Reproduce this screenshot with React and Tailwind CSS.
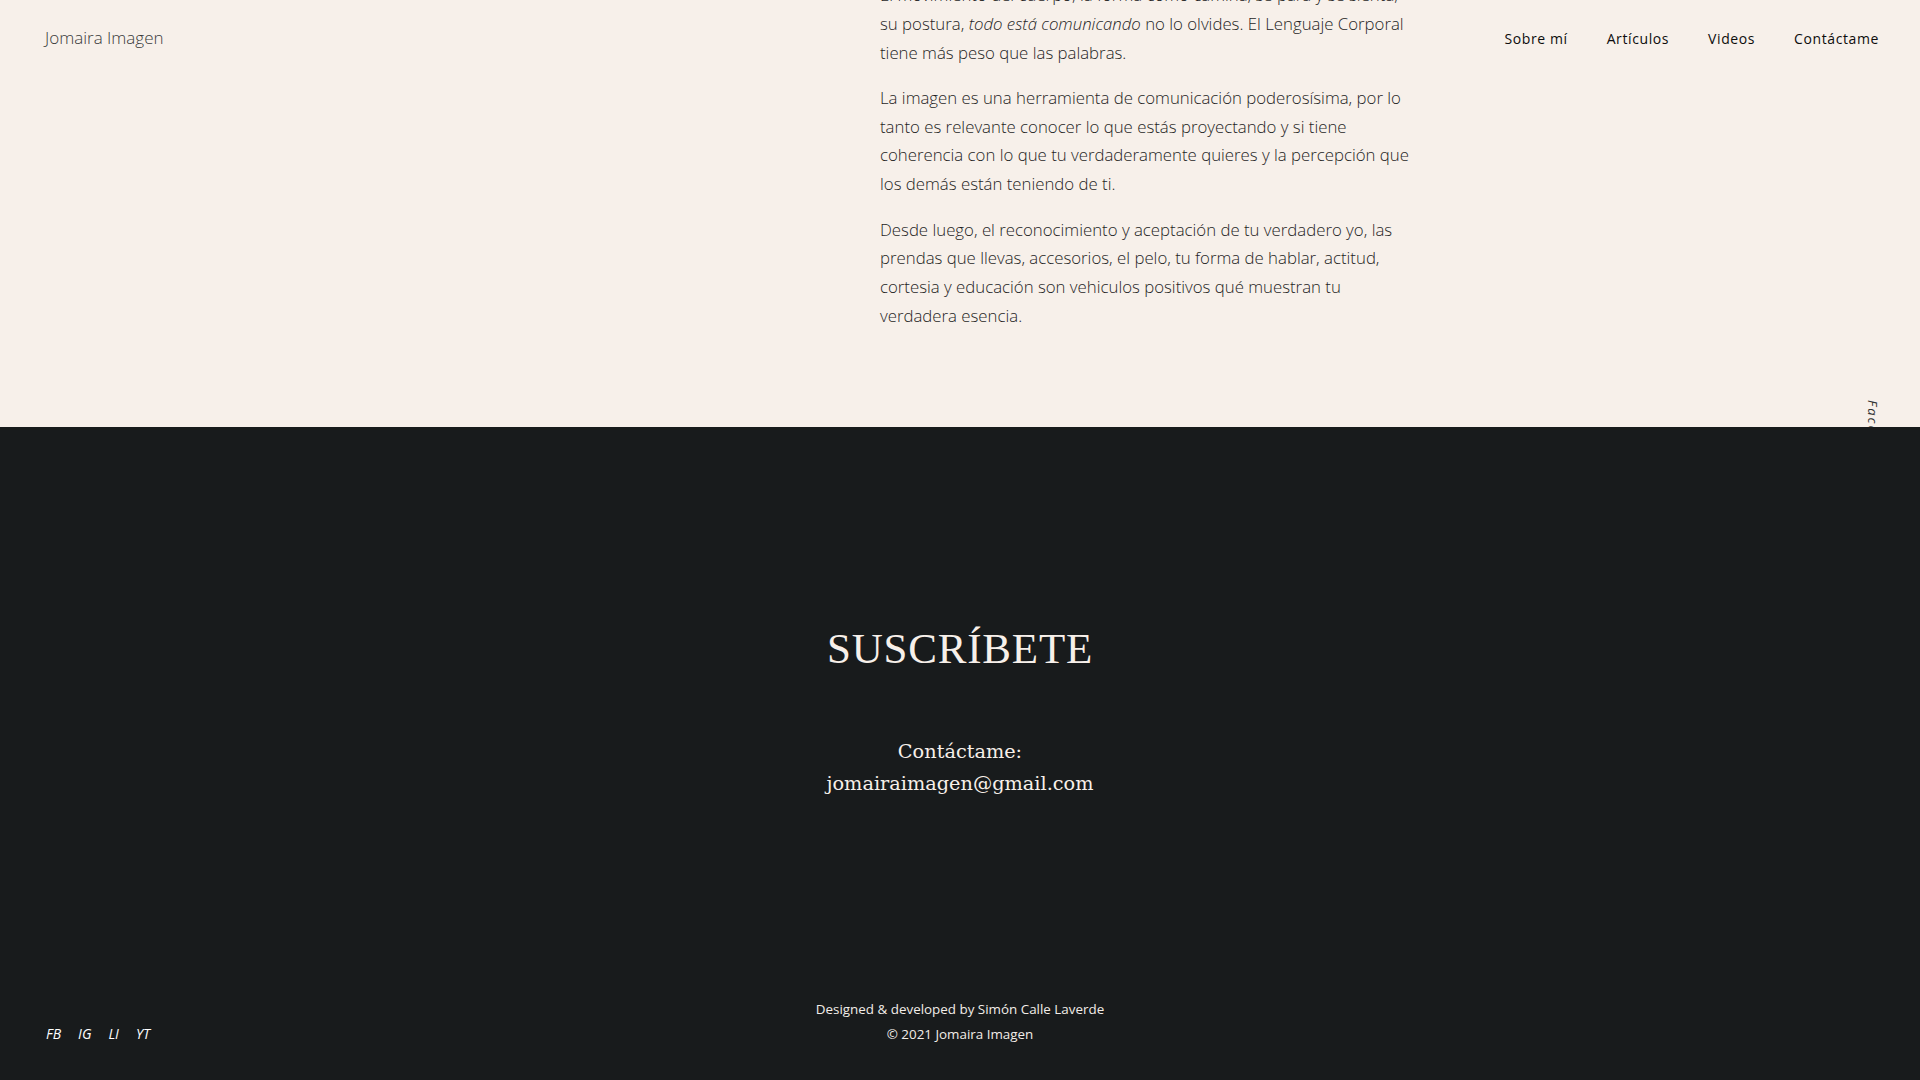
import React from "react";

const sans = "font-['Open_Sans',_'Noto_Sans',_sans-serif]";

export default function App() {
  return (
    <div className="relative w-full h-[1080px] overflow-hidden bg-[#181b1c]">
      {/* cream article section */}
      <section className="relative h-[427px] overflow-hidden bg-[#f7f0ea]">
        <div className={`ml-[880px] w-[560px] -mt-[19px] ${sans} font-light text-[16.8px] leading-[28.8px] text-[#1f1f1f] whitespace-nowrap`}>
          <p className="mb-[16.5px]">
            El movimiento del cuerpo, la forma como camina, se para y se sienta,<br />
            su postura, <em>todo está comunicando</em> no lo olvides. El Lenguaje Corporal<br />
            tiene más peso que las palabras.
          </p>
          <p className="mb-[16.5px]">
            La imagen es una herramienta de comunicación poderosísima, por lo<br />
            tanto es relevante conocer lo que estás proyectando y si tiene<br />
            coherencia con lo que tu verdaderamente quieres y la percepción que<br />
            los demás están teniendo de ti.
          </p>
          <p>
            Desde luego, el reconocimiento y aceptación de tu verdadero yo, las<br />
            prendas que llevas, accesorios, el pelo, tu forma de hablar, actitud,<br />
            cortesia y educación son vehiculos positivos qué muestran tu<br />
            verdadera esencia.
          </p>
        </div>
        {/* side social rail (fixed) */}
        <div className={`absolute left-[1862px] top-[400px] ${sans} text-[13px] italic tracking-[2px] text-[#333]`}>
          <div className="rotate-90 origin-top-left translate-x-[20px]">Facebook</div>
        </div>
      </section>

      {/* header overlay */}
      <header className={`absolute top-0 left-0 right-0 flex items-center justify-between h-[76px] pl-[45px] pr-[41px] ${sans}`}>
        <div className="text-[17px] font-light text-[#3a3a3a]">Jomaira Imagen</div>
        <nav className="flex items-center gap-[39px] text-[14px] tracking-[0.6px] text-[#0d0d0d]">
          <span>Sobre mí</span>
          <span>Artículos</span>
          <span>Videos</span>
          <span>Contáctame</span>
        </nav>
      </header>

      {/* dark footer */}
      <footer className="relative h-[653px] flex flex-col items-center text-[#f7f0ea]">
        <h2 className="mt-[190px] font-['Liberation_Serif',_serif] text-[43px] leading-[64px] tracking-[0.8px]">
          SUSCRÍBETE
        </h2>
        <div className="mt-[55px] text-center font-['DejaVu_Serif',_serif] text-[19.3px] leading-[32px]">
          <div>Contáctame:</div>
          <div>jomairaimagen@gmail.com</div>
        </div>
        <div className={`mt-auto mb-[33px] text-center ${sans} text-[13.4px] leading-[25px] text-[#f2ede8]`}>
          <div>Designed &amp; developed by Simón Calle Laverde</div>
          <div>© 2021 Jomaira Imagen</div>
        </div>
        <div className={`absolute left-[46px] bottom-[36px] flex gap-[17px] ${sans} italic text-[14px] text-white`}>
          <span>FB</span>
          <span>IG</span>
          <span>LI</span>
          <span>YT</span>
        </div>
      </footer>
    </div>
  );
}
